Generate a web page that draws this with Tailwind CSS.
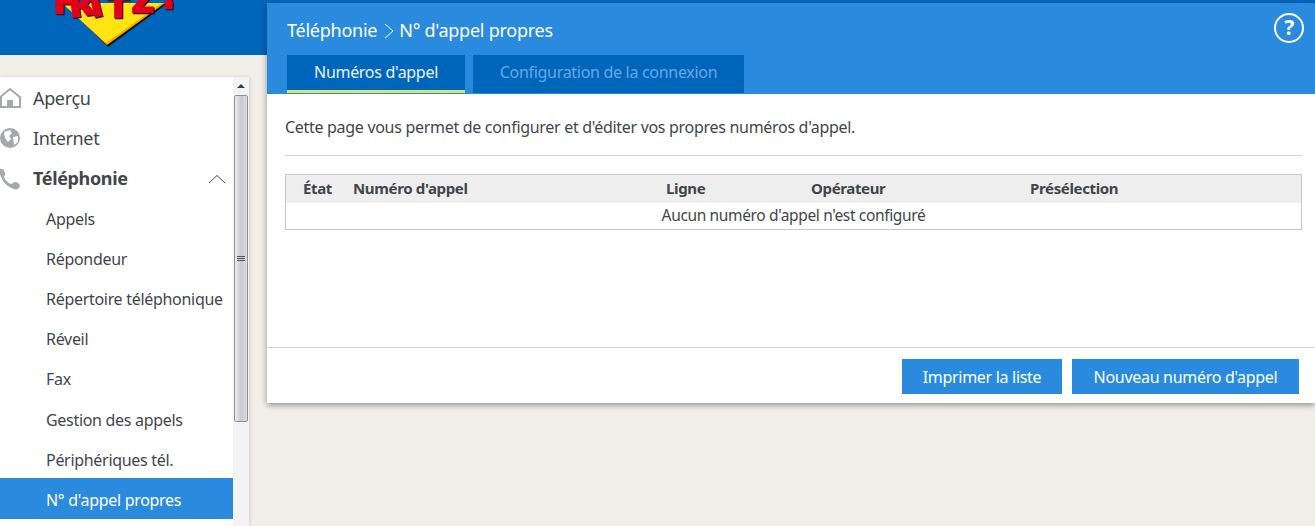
<!DOCTYPE html>
<html lang="fr">
<head>
  <meta charset="UTF-8" />
  <title>FRITZ!Box - N° d'appel propres</title>
  <script src="https://cdn.jsdelivr.net/npm/@tailwindcss/browser@4"></script>
</head>
<body class="bg-[#f1eee8] font-['Noto_Sans',sans-serif] text-[#3f464c] h-[526px] overflow-hidden flex text-[16px] tracking-[-0.3px]">

  <!-- Left column -->
  <aside class="w-[267px] shrink-0">
    <div class="h-[55px] bg-[#0066bb] overflow-hidden pl-[52px]">
      <svg width="124" height="50" viewBox="0 0 124 50">
        <polygon points="12,3 116,3 56,47" fill="#161616" />
        <polygon points="10,3 113,3 55,45" fill="#f7a70f" />
        <polygon points="10,3 110,3 54,43" fill="#ffe414" />
        <g class="drop-shadow-[1px_1px_0_#151515]" font-family="DejaVu Sans" font-weight="700" font-size="30" fill="#e2001a" stroke="#e2001a" stroke-width="2.5">
          <text x="2" y="13">F</text>
          <text x="19" y="17" transform="rotate(-8 19 17)">R</text>
          <text x="41" y="17" transform="rotate(-14 41 17)">I</text>
          <text x="56" y="17">T</text>
          <text x="80" y="12">Z</text>
          <text x="110" y="8">!</text>
        </g>
      </svg>
    </div>

    <div class="mt-[22px] w-[249px] h-[449px] flex overflow-hidden shadow-[1px_0_3px_rgba(0,0,0,0.12)]">
      <nav class="w-[233px] bg-white pt-[1px]">
        <a class="h-[40px] flex items-center text-[18px] tracking-[-0.35px]">
          <svg class="w-[22px] h-[22px] mr-[11px]" viewBox="0 0 22 22" fill="none" stroke="#a6a9ab" stroke-width="2"><path d="M-1 11 L10 2 L21 11" /><path d="M1 10 V20 H20 V10" /><rect x="7" y="13" width="6" height="7" fill="#a6a9ab" stroke="none" /></svg>
          Aperçu
        </a>
        <a class="h-[40px] flex items-center text-[18px] tracking-[-0.35px]">
          <svg class="w-[22px] h-[22px] mr-[11px]" viewBox="0 0 22 22"><circle cx="10" cy="11" r="10" fill="#a6a9ab" /><path d="M4 5 L10 3 L12 6 L9 9 L11 12 L8 15 L5 11 Z M13 10 L18 9 L18 15 L14 18 Z" fill="#fff" /></svg>
          Internet
        </a>
        <a class="h-[41px] flex items-center text-[18px] tracking-[-0.35px] font-bold">
          <svg class="w-[22px] h-[22px] mr-[11px]" viewBox="0 0 22 22"><path d="M0 1 C3 0 4 2 5 5 C6 7 4 8 4 9 C5 12 8 15 11 16 C13 16 13 14 15 14 C17 14 20 16 20 18 C19 21 16 22 14 21 C7 19 2 13 0 6 Z" fill="#a6a9ab" /></svg>
          <span class="flex-1">Téléphonie</span>
          <svg class="w-[18px] h-[10px] mr-[7px]" viewBox="0 0 18 10" fill="none" stroke="#3f464c" stroke-width="1"><path d="M1 9 L9 1.5 L17 9" /></svg>
        </a>
        <a class="h-[40px] flex items-center pl-[46px]">Appels</a>
        <a class="h-[40px] flex items-center pl-[46px]">Répondeur</a>
        <a class="h-[40px] flex items-center pl-[46px]">Répertoire téléphonique</a>
        <a class="h-[40px] flex items-center pl-[46px]">Réveil</a>
        <a class="h-[40px] flex items-center pl-[46px]">Fax</a>
        <a class="h-[41px] flex items-center pl-[46px]">Gestion des appels</a>
        <a class="h-[38px] flex items-center pl-[46px] pt-[2px]">Périphériques tél.</a>
        <a class="h-[41px] flex items-center pl-[46px] pt-[3px] bg-[#2a8ade] text-white">N° d'appel propres</a>
      </nav>
      <!-- Scrollbar -->
      <div class="w-[16px] bg-[#f3f3f5] flex flex-col items-center">
        <div class="h-[18px] flex items-center justify-center">
          <span class="border-x-[4px] border-x-transparent border-b-[4px] border-b-[#3f3f3f]"></span>
        </div>
        <div class="w-[14px] h-[327px] border border-[#8f9095] rounded-[2px] bg-gradient-to-r from-[#eeeef1] via-[#c8c8cf] to-[#dcdce2] flex flex-col gap-[1px] items-center justify-center">
          <span class="w-[8px] h-[1px] bg-[#555]"></span>
          <span class="w-[8px] h-[1px] bg-[#555]"></span>
          <span class="w-[8px] h-[1px] bg-[#555]"></span>
        </div>
      </div>
    </div>
  </aside>

  <!-- Main column -->
  <main class="flex-1 min-w-0">
    <div class="h-[3px] bg-[#0066bb]"></div>
    <section class="h-[400px] bg-white shadow-[0_2px_6px_rgba(0,0,0,0.4)] flex flex-col">
      <header class="h-[91px] bg-[#2a8ade] pl-[20px] pr-[11px] text-white flex flex-col">
        <div class="flex justify-between h-[52px]">
          <div class="flex items-center text-[18px] tracking-[-0.25px] h-[55px]">
            Téléphonie
            <svg class="w-[10px] h-[16px] ml-[7px] mr-[5px]" viewBox="0 0 10 16" fill="none" stroke="#fff" stroke-width="1"><path d="M1 1 L9 8 L1 15" /></svg>
            N° d'appel propres
          </div>
          <div class="mt-[10px] w-[30px] h-[30px] rounded-full border-[2px] border-white flex items-center justify-center font-bold text-[21px]">?</div>
        </div>
        <div class="flex gap-[8px]">
          <div class="w-[178px] h-[38px] bg-[#0066bb] border-b-[3px] border-b-[#d6e66a] pb-[1px] flex items-center justify-center text-[#e8f4fc]">Numéros d'appel</div>
          <div class="w-[271px] h-[38px] bg-[#0066bb] border-b-[3px] border-b-[#0066bb] pb-[1px] flex items-center justify-center text-[#66a8e4]">Configuration de la connexion</div>
        </div>
      </header>

      <div class="flex-1 pl-[18px] pr-[13px] pt-[21px]">
        <p class="h-[40px] border-b border-[#d2d2d2] box-content">Cette page vous permet de configurer et d'éditer vos propres numéros d'appel.</p>
        <div class="mt-[18px] border border-[#c8c8c8]">
          <div class="h-[28px] pb-[2px] bg-[#eeeeee] flex items-center font-bold text-[15px] tracking-[-0.35px]">
            <span class="w-[67px] pl-[17px]">État</span>
            <span class="w-[313px]">Numéro d'appel</span>
            <span class="w-[145px]">Ligne</span>
            <span class="w-[219px]">Opérateur</span>
            <span>Présélection</span>
          </div>
          <div class="h-[26px] flex items-center justify-center text-[15.5px] tracking-[-0.35px]">Aucun numéro d'appel n'est configuré</div>
        </div>
      </div>

      <footer class="h-[56px] border-t border-[#d2d2d2] flex justify-end gap-[10px] pt-[11px] pr-[16px]">
        <button class="w-[160px] h-[35px] bg-[#2a8ade] text-white">Imprimer la liste</button>
        <button class="w-[227px] h-[35px] bg-[#2a8ade] text-white">Nouveau numéro d'appel</button>
      </footer>
    </section>
  </main>
</body>
</html>
